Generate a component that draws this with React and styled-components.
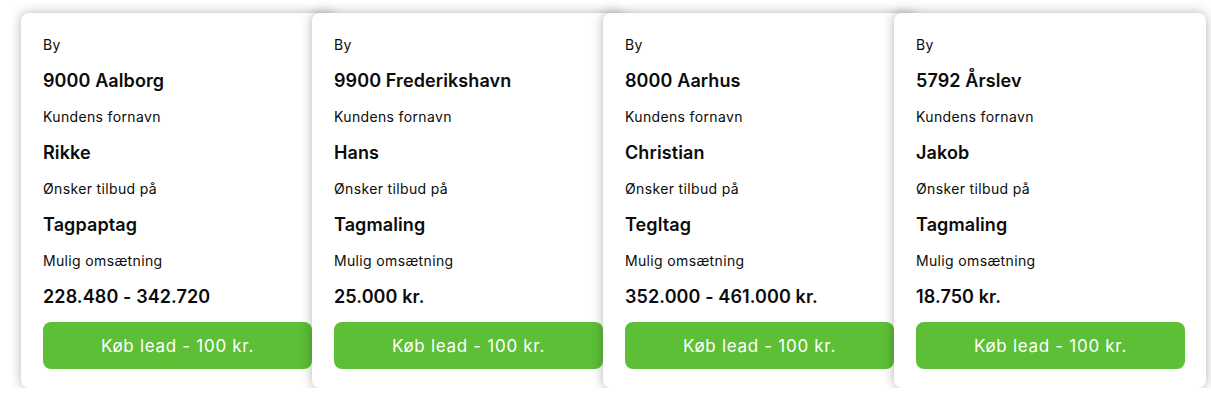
import styled, { createGlobalStyle } from 'styled-components';

const Global = createGlobalStyle`
  body {
    margin: 0;
    background: #ffffff;
    font-family: Inter, "Noto Sans", sans-serif;
  }
`;

const Row = styled.div`
  display: flex;
  padding: 13px 0 0 21px;
`;

const Card = styled.div`
  width: 312px;
  height: 375px;
  flex-shrink: 0;
  box-sizing: border-box;
  margin-right: -21px;
  padding: 13px 21px 19px 22px;
  background: #fff;
  border-radius: 8px;
  box-shadow: 0 0 12px rgba(0, 0, 0, 0.3);
  display: flex;
  flex-direction: column;
`;

const Line = styled.div`
  height: 36px;
  display: flex;
  align-items: center;
  color: #0b0b0b;
  font-size: ${(p) => (p.$strong ? '18px' : '14px')};
  font-weight: ${(p) => (p.$strong ? 600 : 400)};
  letter-spacing: ${(p) => (p.$strong ? '0.1px' : '0.35px')};
  white-space: nowrap;
`;

const Button = styled.button`
  margin-top: 8px;
  height: 47px;
  width: 100%;
  border: none;
  border-radius: 8px;
  background: #5cbf36;
  color: #fff;
  font-family: inherit;
  font-size: 17px;
  font-weight: 400;
  letter-spacing: 0.7px;
  cursor: pointer;
`;

const leads = [
  { city: '9000 Aalborg', name: 'Rikke', job: 'Tagpaptag', value: '228.480 - 342.720' },
  { city: '9900 Frederikshavn', name: 'Hans', job: 'Tagmaling', value: '25.000 kr.' },
  { city: '8000 Aarhus', name: 'Christian', job: 'Tegltag', value: '352.000 - 461.000 kr.' },
  { city: '5792 Årslev', name: 'Jakob', job: 'Tagmaling', value: '18.750 kr.' },
];

export default function App() {
  return (
    <>
      <Global />
      <Row>
        {leads.map((l) => (
          <Card key={l.city}>
            <Line>By</Line>
            <Line $strong>{l.city}</Line>
            <Line>Kundens fornavn</Line>
            <Line $strong>{l.name}</Line>
            <Line>Ønsker tilbud på</Line>
            <Line $strong>{l.job}</Line>
            <Line>Mulig omsætning</Line>
            <Line $strong>{l.value}</Line>
            <Button>Køb lead - 100 kr.</Button>
          </Card>
        ))}
      </Row>
    </>
  );
}
